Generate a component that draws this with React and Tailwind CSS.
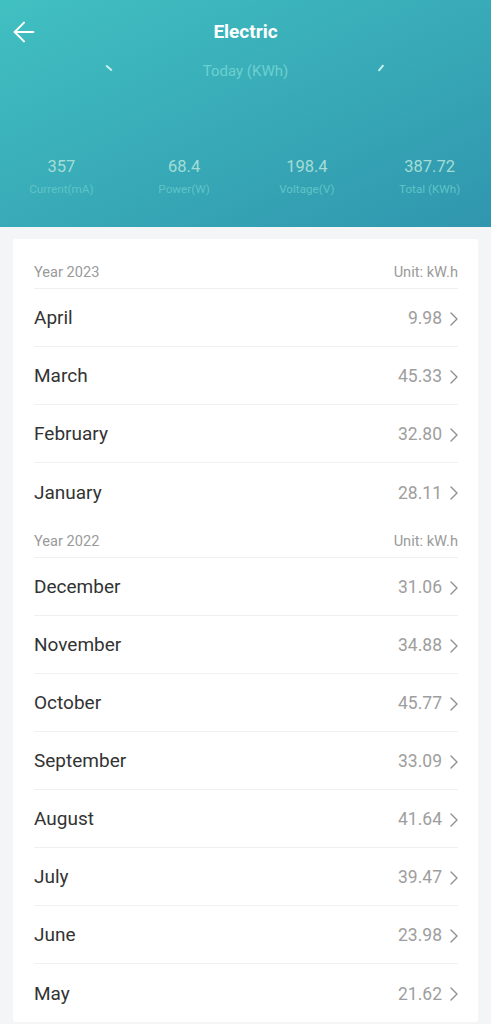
import { ArrowLeft } from "lucide-react";

const years = [
  {
    year: "Year 2023",
    months: [
      ["April", "9.98"],
      ["March", "45.33"],
      ["February", "32.80"],
      ["January", "28.11"],
    ],
  },
  {
    year: "Year 2022",
    months: [
      ["December", "31.06"],
      ["November", "34.88"],
      ["October", "45.77"],
      ["September", "33.09"],
      ["August", "41.64"],
      ["July", "39.47"],
      ["June", "23.98"],
      ["May", "21.62"],
    ],
  },
];

const stats = [
  ["357", "Current(mA)"],
  ["68.4", "Power(W)"],
  ["198.4", "Voltage(V)"],
  ["387.72", "Total (KWh)"],
];

function Chevron() {
  return (
    <svg width="8" height="14" viewBox="0 0 8 14" fill="none" className="text-[#8f8f8f]">
      <polyline points="1,1 7,7 1,13" stroke="currentColor" strokeWidth="1.4" strokeLinecap="round" strokeLinejoin="round" />
    </svg>
  );
}

export default function App() {
  return (
    <div className="min-h-screen bg-[#f4f5f6] font-['Roboto',sans-serif]">
      {/* Header */}
      <header className="h-[227px] bg-gradient-to-br from-[#41c0c1] to-[#3096ae] relative">
        <div className="flex items-center h-[64px] px-[8px] relative">
          <ArrowLeft className="w-[32px] h-[32px] text-white" strokeWidth={1.5} />
          <h1 className="absolute inset-x-0 text-center text-white text-[19px] font-bold pointer-events-none">
            Electric
          </h1>
        </div>

        <div className="relative h-[14px] flex items-center justify-center">
          <span className="text-[15px] text-[#6dd0cf]">Today (KWh)</span>
          <span className="absolute left-[105px] top-[3px] w-[8px] h-[2px] bg-[#c8f0ee] rotate-[40deg] rounded"></span>
          <span className="absolute left-[377px] top-[3px] w-[8px] h-[2px] bg-[#c8f0ee] -rotate-[50deg] rounded"></span>
        </div>

        <div className="grid grid-cols-4 mt-[79px]">
          {stats.map(([value, label]) => (
            <div key={label} className="flex flex-col items-center">
              <span className="text-[16.5px] leading-[20px] text-[#a3ddd6]">{value}</span>
              <span className="text-[11.7px] leading-[14px] mt-[5px] text-[#5fc4c7]">{label}</span>
            </div>
          ))}
        </div>
      </header>

      {/* List */}
      <div className="px-[13px] pt-[12px] pb-[3px]">
        <div className="bg-white rounded-[2px] pt-[13px]">
          {years.map((group) => (
            <div key={group.year}>
              <div className="ml-[21px] mr-[20px] h-[37px] pt-[6px] flex items-center justify-between border-b border-[#f0f0f0]">
                <span className="text-[14.6px] text-[#9a9a9a]">{group.year}</span>
                <span className="text-[14.6px] text-[#9a9a9a]">Unit: kW.h</span>
              </div>
              {group.months.map(([month, value], i) => (
                <div
                  key={month}
                  className={
                    "ml-[21px] mr-[20px] h-[58px] pt-[2px] flex items-center justify-between " +
                    (i < group.months.length - 1 ? "border-b border-[#f0f0f0]" : "")
                  }
                >
                  <span className="text-[19px] text-[#333333]">{month}</span>
                  <span className="flex items-center gap-[8px]">
                    <span className="text-[17.5px] text-[#9e9e9e]">{value}</span>
                    <Chevron />
                  </span>
                </div>
              ))}
            </div>
          ))}
        </div>
      </div>
    </div>
  );
}
